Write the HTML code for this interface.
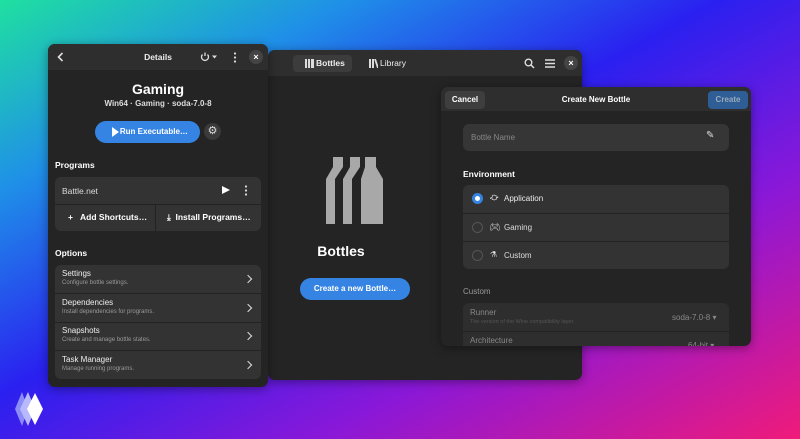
<!DOCTYPE html>
<html><head><meta charset="utf-8"><style>
*{box-sizing:border-box;margin:0;padding:0}
body{width:800px;height:439px;overflow:hidden;position:relative;font-family:"Liberation Sans","DejaVu Sans",sans-serif;color:#fff;
background:linear-gradient(to bottom right,#1fe0a0 0%,#1f8fe8 22%,#2a20f0 45%,#8a18d8 70%,#f01a7a 100%);}
.win{position:absolute;background:#242424;border-radius:7px;overflow:hidden;box-shadow:0 2px 10px rgba(0,0,0,.4)}
.hdr{position:absolute;left:0;right:0;top:0;height:26px;background:#2e2e2e}
.t{position:absolute;white-space:nowrap}
.card{position:absolute;background:#333;border-radius:6px;overflow:hidden}
.row{position:absolute;left:0;right:0;border-top:1px solid #222}
.chev{position:absolute;right:10px;width:6px;height:6px;border-right:1.6px solid #ddd;border-top:1.6px solid #ddd;transform:rotate(45deg)}
.close{position:absolute;width:14px;height:14px;border-radius:50%;background:#444;font-size:9px;text-align:center;line-height:14px;font-weight:bold}
.radio{position:absolute;left:9px;width:11px;height:11px;border-radius:50%;border:1.4px solid #555}
</style></head><body>

<!-- main window -->
<div class="win" style="left:268px;top:50px;width:314px;height:330px">
 <div class="hdr"></div>
 <div style="position:absolute;left:25px;top:5px;width:59px;height:17px;background:#3c3c3c;border-radius:4px"></div>
 <svg class="t" style="left:37px;top:9px" width="9" height="9"><rect x="0" y="0" width="2" height="9" fill="#ddd"/><rect x="3" y="0" width="2" height="9" fill="#ddd"/><rect x="6" y="0" width="3" height="9" fill="#ddd"/></svg>
 <div class="t" style="left:48px;top:8px;font-size:8.5px;font-weight:bold;color:#eee">Bottles</div>
 <svg class="t" style="left:101px;top:9px" width="9" height="9"><rect x="0" y="0" width="2" height="9" fill="#ddd"/><rect x="3" y="0" width="2" height="9" fill="#ddd"/><path d="M6 0 L9 9" stroke="#ddd" stroke-width="1.8"/></svg>
 <div class="t" style="left:112px;top:8px;font-size:8.5px;color:#eee">Library</div>
 <svg class="t" style="left:256px;top:8px" width="11" height="11"><circle cx="4.5" cy="4.5" r="3.3" stroke="#ddd" stroke-width="1.4" fill="none"/><path d="M7 7 L10 10" stroke="#ddd" stroke-width="1.5"/></svg>
 <svg class="t" style="left:277px;top:9px" width="10" height="9"><path d="M0 1H10M0 4.5H10M0 8H10" stroke="#ddd" stroke-width="1.4"/></svg>
 <div class="close" style="left:296px;top:6px">×</div>
 <svg class="t" style="left:58px;top:107px" width="58" height="67"><path d="M0 67V22L7 10V0H17V10L9 22V67Z M17 67V22L24 10V0H34V10L26 22V67Z M35 67V22L39 10V0H50V10L57 22V67Z" fill="#a8a8a8"/></svg>
 <div class="t" style="left:0;width:146px;text-align:center;top:193px;font-size:14px;font-weight:bold">Bottles</div>
 <div class="t" style="left:32px;top:228px;width:110px;height:22px;border-radius:11px;background:#3584e4;font-size:8px;font-weight:bold;text-align:center;line-height:22px">Create a new Bottle…</div>
</div>

<!-- details window -->
<div class="win" style="left:48px;top:44px;width:220px;height:343px;background:#242424">
 <div class="hdr"></div>
 <svg class="t" style="left:9px;top:8px" width="7" height="10"><path d="M5.5 1L1.5 5L5.5 9" stroke="#ddd" stroke-width="1.6" fill="none"/></svg>
 <div class="t" style="left:0;width:220px;text-align:center;top:8px;font-size:8.5px;font-weight:bold;color:#eee">Details</div>
 <svg class="t" style="left:152px;top:8px" width="20" height="10"><path d="M2.5 2.5A3.5 3.5 0 1 0 7.5 2.5M5 0.5V4" stroke="#ddd" stroke-width="1.3" fill="none"/><path d="M12 3.5H17L14.5 6.5Z" fill="#ddd"/></svg>
 <svg class="t" style="left:185px;top:8px" width="4" height="11"><circle cx="2" cy="1.5" r="1.1" fill="#ddd"/><circle cx="2" cy="5.5" r="1.1" fill="#ddd"/><circle cx="2" cy="9.5" r="1.1" fill="#ddd"/></svg>
 <div class="close" style="left:201px;top:6px">×</div>
 <div class="t" style="left:0;width:220px;text-align:center;top:37px;font-size:14px;font-weight:bold">Gaming</div>
 <div class="t" style="left:0;width:220px;text-align:center;top:55px;font-size:8px;font-weight:bold;color:#ddd">Win64 · Gaming · soda-7.0-8</div>
 <div class="t" style="left:47px;top:77px;width:105px;height:22px;border-radius:11px;background:#3584e4;font-size:8px;font-weight:bold;line-height:22px;padding-left:16px"><span style="position:absolute;left:17px;top:6px;border-left:7px solid #fff;border-top:5px solid transparent;border-bottom:5px solid transparent"></span>&nbsp;&nbsp;&nbsp;&nbsp;Run Executable…</div>
 <div class="t" style="left:156px;top:79px;width:17px;height:17px;border-radius:50%;background:#3a3a3a;text-align:center;font-size:11px;line-height:17px;color:#ddd">⚙</div>
 <div class="t" style="left:7px;top:116px;font-size:8.5px;font-weight:bold">Programs</div>
 <div class="card" style="left:7px;top:133px;width:206px;height:54px">
  <div class="t" style="left:7px;top:9px;font-size:8.5px;color:#ddd">Battle.net</div>
  <span class="t" style="left:167px;top:9px;border-left:8px solid #fff;border-top:4.5px solid transparent;border-bottom:4.5px solid transparent"></span>
  <svg class="t" style="left:189px;top:8px" width="4" height="11"><circle cx="2" cy="1.5" r="1.1" fill="#ddd"/><circle cx="2" cy="5.5" r="1.1" fill="#ddd"/><circle cx="2" cy="9.5" r="1.1" fill="#ddd"/></svg>
  <div class="row" style="top:27px;height:27px"></div>
  <div style="position:absolute;left:100px;top:28px;width:1px;height:26px;background:#222"></div>
  <div class="t" style="left:13px;top:35px;font-size:8.5px;font-weight:bold">+&nbsp;&nbsp;&nbsp;Add Shortcuts…</div>
  <div class="t" style="left:112px;top:35px;font-size:8.5px;font-weight:bold">⤓&nbsp;&nbsp;Install Programs…</div>
 </div>
 <div class="t" style="left:7px;top:204px;font-size:8.5px;font-weight:bold">Options</div>
 <div class="card" style="left:7px;top:221px;width:206px;height:114px">
  <div class="t" style="left:7px;top:4px;font-size:8px;color:#eee">Settings</div><div class="t" style="left:7px;top:15px;font-size:6px;color:#999">Configure bottle settings.</div><div class="chev" style="top:11px"></div>
  <div class="row" style="top:28px"></div>
  <div class="t" style="left:7px;top:33px;font-size:8px;color:#eee">Dependencies</div><div class="t" style="left:7px;top:44px;font-size:6px;color:#999">Install dependencies for programs.</div><div class="chev" style="top:40px"></div>
  <div class="row" style="top:57px"></div>
  <div class="t" style="left:7px;top:61px;font-size:8px;color:#eee">Snapshots</div><div class="t" style="left:7px;top:72px;font-size:6px;color:#999">Create and manage bottle states.</div><div class="chev" style="top:68px"></div>
  <div class="row" style="top:85px"></div>
  <div class="t" style="left:7px;top:90px;font-size:8px;color:#eee">Task Manager</div><div class="t" style="left:7px;top:101px;font-size:6px;color:#999">Manage running programs.</div><div class="chev" style="top:97px"></div>
 </div>
</div>

<!-- dialog -->
<div class="win" style="left:441px;top:87px;width:310px;height:259px">
 <div class="hdr" style="height:24px;background:#2e2e2e"></div>
 <div class="t" style="left:4px;top:4px;width:40px;height:18px;background:#3e3e3e;border-radius:4px;font-size:8px;font-weight:bold;text-align:center;line-height:18px">Cancel</div>
 <div class="t" style="left:0;width:310px;text-align:center;top:8px;font-size:8px;font-weight:bold">Create New Bottle</div>
 <div class="t" style="left:267px;top:4px;width:40px;height:18px;background:#2f5e96;border-radius:4px;font-size:8px;font-weight:bold;text-align:center;line-height:18px;color:#9ab">Create</div>
 <div class="card" style="left:22px;top:37px;width:266px;height:27px;background:#363636">
  <div class="t" style="left:8px;top:9px;font-size:8px;color:#888">Bottle Name</div>
  <div class="t" style="left:243px;top:6px;font-size:10px;color:#ddd">✎</div>
 </div>
 <div class="t" style="left:22px;top:82px;font-size:8.5px;font-weight:bold">Environment</div>
 <div class="card" style="left:22px;top:98px;width:266px;height:84px">
  <div class="radio" style="top:8px;background:#3584e4;border:3px solid #3584e4;box-shadow:inset 0 0 0 2px #3584e4"><div style="width:5px;height:5px;background:#fff;border-radius:50%"></div></div>
  <div class="t" style="left:27px;top:8px;font-size:8px;color:#ddd">⛮</div>
  <div class="t" style="left:41px;top:9px;font-size:8px;color:#eee">Application</div>
  <div class="row" style="top:28px"></div>
  <div class="radio" style="top:37px"></div>
  <div class="t" style="left:26px;top:37px;font-size:9px;color:#ddd">🎮︎</div>
  <div class="t" style="left:41px;top:38px;font-size:8px;color:#ddd">Gaming</div>
  <div class="row" style="top:56px"></div>
  <div class="radio" style="top:65px"></div>
  <div class="t" style="left:27px;top:65px;font-size:8px;color:#ddd">⚗</div>
  <div class="t" style="left:41px;top:66px;font-size:8px;color:#ddd">Custom</div>
 </div>
 <div class="t" style="left:22px;top:200px;font-size:8px;color:#999">Custom</div>
 <div class="card" style="left:22px;top:216px;width:266px;height:60px;background:#2e2e2e">
  <div class="t" style="left:7px;top:5px;font-size:8px;color:#888">Runner</div>
  <div class="t" style="left:7px;top:16px;font-size:5.5px;color:#555">The version of the Wine compatibility layer.</div>
  <div class="t" style="left:209px;top:10px;font-size:8px;color:#888">soda-7.0-8 ▾</div>
  <div class="row" style="top:28px"></div>
  <div class="t" style="left:7px;top:33px;font-size:8px;color:#888">Architecture</div>
  <div class="t" style="left:225px;top:38px;font-size:8px;color:#888">64-bit ▾</div>
 </div>
</div>

<!-- logo -->
<svg style="position:absolute;left:14px;top:392px" width="32" height="34">
 <path d="M8 0L1 17L8 34L14 17Z" fill="#8c8cf8"/>
 <path d="M14 0L6 17L14 34L21 17Z" fill="#b8b8ff"/>
 <path d="M21 1L13 17L21 33L29 17Z" fill="#fff"/>
</svg>
</body></html>
